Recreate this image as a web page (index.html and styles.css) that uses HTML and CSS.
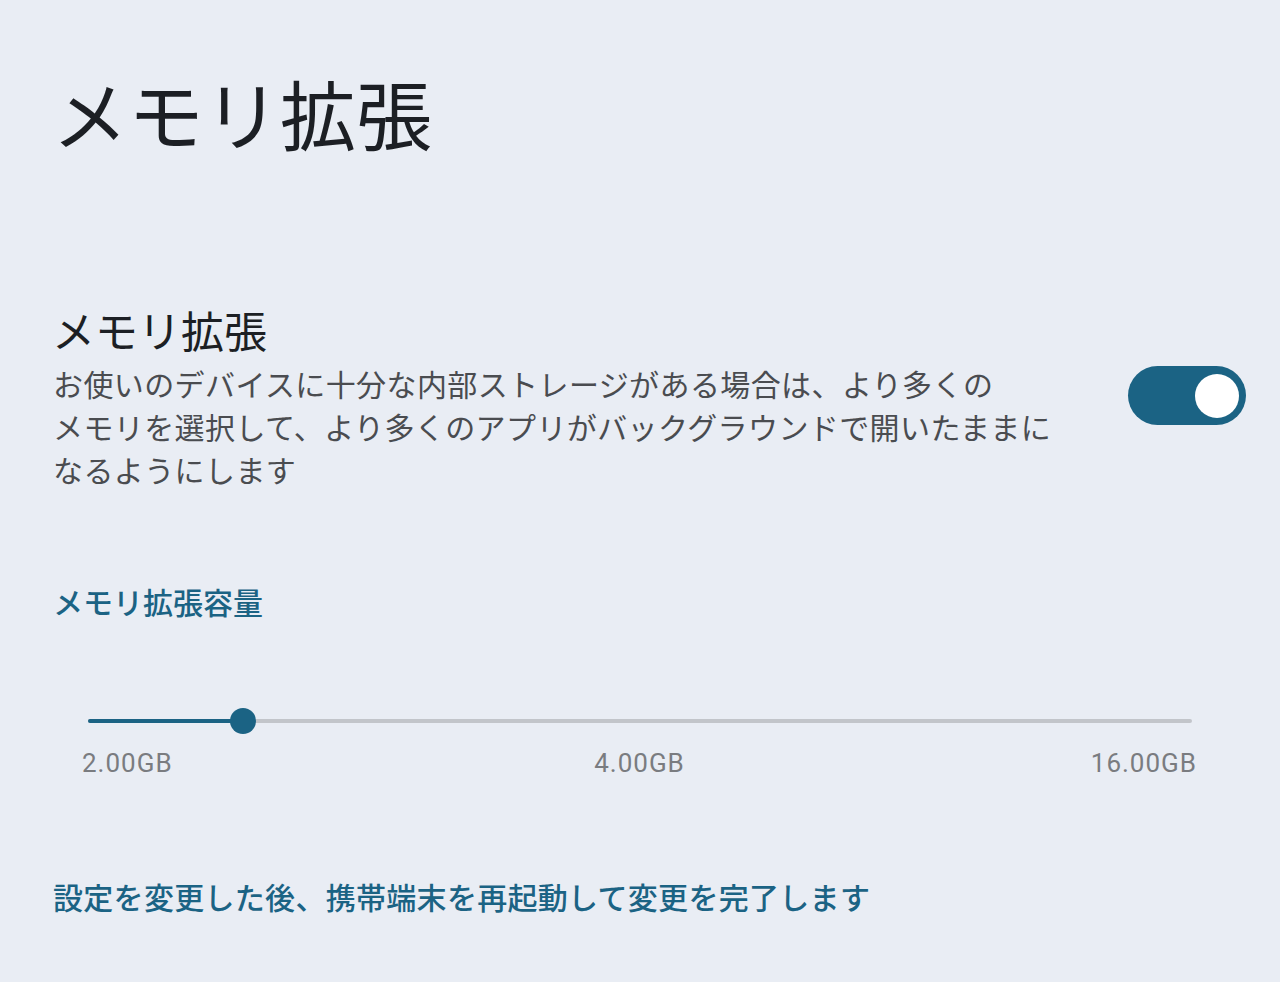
FILE: index.html
```html
<!DOCTYPE html>
<html lang="ja">
<head>
    <meta charset="UTF-8">
    <meta name="viewport" content="width=device-width, initial-scale=1.0">
    <title>メモリ拡張</title>
    <link rel="stylesheet" href="styles.css">
</head>
<body>
    <div class="page">
        <h1 class="page-title">メモリ拡張</h1>

        <div class="setting-row">
            <div class="setting-text">
                <div class="setting-title">メモリ拡張</div>
                <p class="setting-desc">お使いのデバイスに十分な内部ストレージがある場合は、より多くの<br>メモリを選択して、より多くのアプリがバックグラウンドで開いたままに<br>なるようにします</p>
            </div>
            <div class="toggle on">
                <div class="toggle-knob"></div>
            </div>
        </div>

        <div class="section-label">メモリ拡張容量</div>

        <div class="slider">
            <div class="slider-track">
                <div class="slider-fill" style="width: 14%;">
                    <div class="slider-thumb"></div>
                </div>
            </div>
            <div class="slider-labels">
                <span>2.00GB</span>
                <span>4.00GB</span>
                <span class="label-end">16.00GB</span>
            </div>
        </div>

        <p class="note">設定を変更した後、携帯端末を再起動して変更を完了します</p>
    </div>
</body>
</html>
```

FILE: styles.css
```css
body {
    font-family: "Noto Sans CJK JP", "Noto Sans", sans-serif;
    background-color: #e9edf4;
    margin: 0;
    padding: 0;
}
.page {
    padding: 66px 34px 40px 53px;
}
.page-title {
    font-size: 76px;
    font-weight: 400;
    line-height: 92px;
    color: #1c1f24;
    margin: 0 0 0 -1px;
}
.setting-row {
    display: flex;
    align-items: center;
    justify-content: space-between;
    margin-top: 146px;
}
.setting-title {
    font-size: 43px;
    line-height: 56px;
    color: #1c1f24;
    margin-top: -3px;
    margin-left: -1px;
}
.setting-desc {
    font-size: 30px;
    line-height: 43px;
    color: #4a4c50;
    margin: 5px 0 0 0;
    letter-spacing: 0.4px;
}
.toggle {
    width: 118px;
    height: 59px;
    border-radius: 30px;
    background-color: #1b6384;
    display: flex;
    align-items: center;
    justify-content: flex-end;
    padding: 0 7px;
    box-sizing: border-box;
    margin-top: -4px;
}
.toggle-knob {
    width: 44px;
    height: 44px;
    border-radius: 50%;
    background-color: #fff;
}
.section-label {
    font-size: 30px;
    line-height: 40px;
    font-weight: 500;
    color: #1b6384;
    margin-top: 90px;
}
.slider {
    margin-top: 98px;
}
.slider-track {
    height: 4px;
    margin: 0 54px 0 35px;
    background-color: #c2c5ca;
    border-radius: 2px;
}
.slider-fill {
    position: relative;
    height: 100%;
    background-color: #1b6384;
    border-radius: 2px;
}
.slider-thumb {
    position: absolute;
    right: -13px;
    top: -11px;
    width: 26px;
    height: 26px;
    border-radius: 50%;
    background-color: #1b6384;
}
.slider-labels {
    display: grid;
    grid-template-columns: 1fr auto 1fr;
    margin: 23px 49px 0 29px;
    font-family: Roboto, "Noto Sans", sans-serif;
    font-size: 26px;
    letter-spacing: 1px;
    line-height: 34px;
    color: #7a7c80;
}
.label-end {
    justify-self: end;
}
.note {
    font-size: 30px;
    line-height: 40px;
    font-weight: 500;
    color: #1b6384;
    letter-spacing: 0.3px;
    margin: 96px 0 0 0;
}
```
